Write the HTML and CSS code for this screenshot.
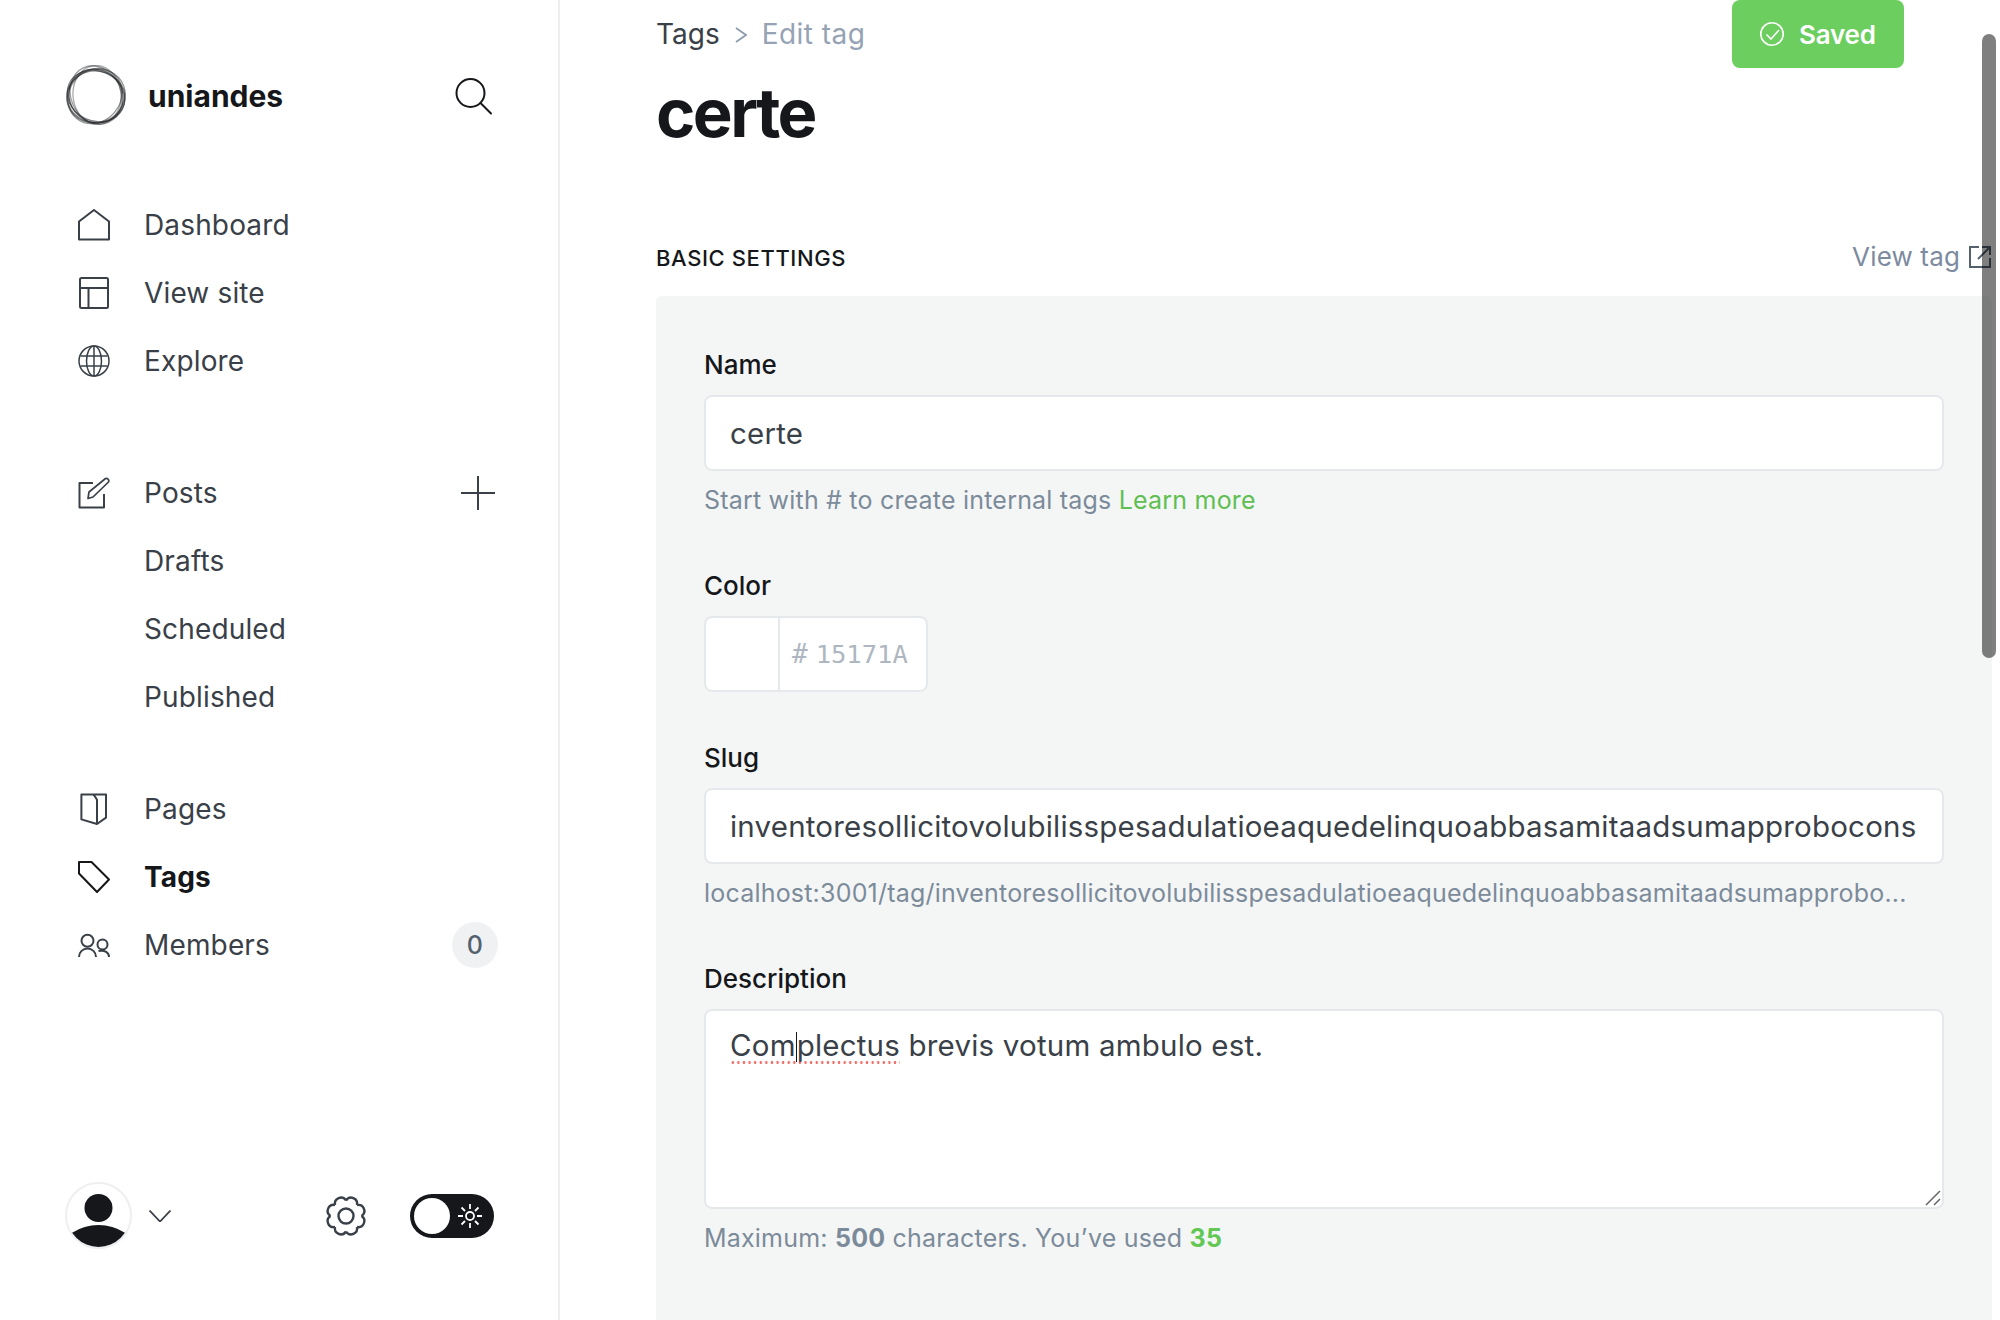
FILE: index.html
```html
<!DOCTYPE html>
<html lang="en">
<head>
  <meta charset="UTF-8">
  <meta name="viewport" content="width=device-width, initial-scale=1.0">
  <title>Edit tag</title>
  <link rel="stylesheet" href="styles.css">
</head>
<body>
  <aside class="sidebar">
    <div class="brand">
      <svg class="logo" viewBox="0 0 62 62" fill="none" stroke="#2b2d30" stroke-width="1.300">
        <ellipse cx="31" cy="31" rx="29.500" ry="25" transform="rotate(25 31 31)" stroke-opacity=".6"/>
        <ellipse cx="31" cy="30" rx="30" ry="25" transform="rotate(65 31 30)" stroke-opacity=".45"/>
        <ellipse cx="32" cy="30" rx="29.500" ry="24" transform="rotate(85 32 30)" stroke-opacity=".4"/>
        <ellipse cx="30" cy="31" rx="29" ry="25.500" transform="rotate(-50 30 31)" stroke-opacity=".5"/>
        <ellipse cx="31" cy="32" rx="29" ry="26" transform="rotate(5 31 32)" stroke-opacity=".6"/>
        <ellipse cx="31" cy="31" rx="29.500" ry="26.500" transform="rotate(-20 31 31)" stroke-opacity=".5"/>
        <ellipse cx="31" cy="31" rx="28" ry="26" transform="rotate(40 31 31)" stroke-opacity=".75"/>
      </svg>
      <span class="brand-name">uniandes</span>
      <svg class="search" viewBox="0 0 38 38" fill="none" stroke="#15171a" stroke-width="2" stroke-linecap="round">
        <circle cx="15.500" cy="16" r="14"/>
        <path d="M25.500 26 36 36.500"/>
      </svg>
    </div>

    <nav class="nav">
      <ul class="nav-group">
        <li class="nav-item">
          <svg class="nav-icon" viewBox="0 0 32 32"><path d="M1 30.500V12.500L16 1l15 11.500V30.500z"/></svg>
          Dashboard
        </li>
        <li class="nav-item">
          <svg class="nav-icon" viewBox="0 0 32 32"><rect x="2" y="1" width="28" height="30" rx="1.500"/><path d="M2 11h28M10.500 11v20"/></svg>
          View site
        </li>
        <li class="nav-item">
          <svg class="nav-icon thin" viewBox="0 0 32 32"><circle cx="16" cy="16" r="15"/><ellipse cx="16" cy="16" rx="7.500" ry="15"/><path d="M2.500 11h27M2.500 21h27M16 1v30"/></svg>
          Explore
        </li>
      </ul>
      <ul class="nav-group">
        <li class="nav-item">
          <svg class="nav-icon" viewBox="0 0 32 32"><path d="M15 6H1.500v24.500h24.500V17"/><path d="M11 15 27.500 1.500a2.500 2.500 0 0 1 3 3.500L15 20l-5 1.500z" stroke-width="1.700"/></svg>
          Posts
          <svg class="plus" viewBox="0 0 34 34"><path d="M17 0v34M0 17h34"/></svg>
        </li>
        <li class="nav-item sub">Drafts</li>
        <li class="nav-item sub">Scheduled</li>
        <li class="nav-item sub">Published</li>
      </ul>
      <ul class="nav-group">
        <li class="nav-item">
          <svg class="nav-icon" viewBox="0 0 32 32"><path d="M3.400 1.400H28v23.200L19 31 3.400 26.400z"/><path d="M15.600 1.400 19 6.700V31"/></svg>
          Pages
        </li>
        <li class="nav-item active">
          <svg class="nav-icon" viewBox="0 0 32 32"><path d="M1 1h12.500L31 18.500 19 31 1 12.500z"/></svg>
          Tags
        </li>
        <li class="nav-item">
          <svg class="nav-icon" viewBox="0 0 32 32"><circle cx="9.500" cy="11.800" r="6"/><path d="M1 28c0-5 4-8.500 8.500-8.500S18 23 18 28"/><circle cx="24.500" cy="15.500" r="5"/><path d="M20.500 22c6.500-1.500 10.500 2 10.500 6"/></svg>
          Members
          <span class="badge">0</span>
        </li>
      </ul>
    </nav>

    <div class="sidebar-foot">
      <div class="avatar">
        <svg viewBox="0 0 63 63"><circle cx="31.500" cy="24" r="14"/><ellipse cx="31.500" cy="66" rx="36" ry="25"/></svg>
      </div>
      <svg class="chevron" viewBox="0 0 22 12"><path d="M.5.5 11 11.500 21.500.5"/></svg>
      <svg class="gear" viewBox="0 0 40 40">
        <defs><path id="tooth" d="M35.500 20C41.200 23.700 37.600 32.300 31 31"/></defs>
        <use href="#tooth"/>
        <use href="#tooth" transform="rotate(45 20 20)"/>
        <use href="#tooth" transform="rotate(90 20 20)"/>
        <use href="#tooth" transform="rotate(135 20 20)"/>
        <use href="#tooth" transform="rotate(180 20 20)"/>
        <use href="#tooth" transform="rotate(225 20 20)"/>
        <use href="#tooth" transform="rotate(270 20 20)"/>
        <use href="#tooth" transform="rotate(315 20 20)"/>
        <circle cx="20" cy="20" r="7.500"/>
      </svg>
      <div class="theme-toggle">
        <span class="knob"></span>
        <svg class="sun" viewBox="0 0 24 24"><circle cx="12" cy="12" r="4"/><path d="M12 0v5M12 19v5M0 12h5M19 12h5M3.500 3.500 7 7M17 17l3.500 3.500M3.500 20.500 7 17M17 7l3.500-3.500"/></svg>
      </div>
    </div>
  </aside>

  <main class="main">
    <div class="topbar">
      <div class="crumbs">
        <span class="crumb-link">Tags</span>
        <svg class="crumb-sep" viewBox="0 0 12 16"><path d="M1 1l10 7-10 7"/></svg>
        <span class="crumb-current">Edit tag</span>
      </div>
      <button class="saved-btn" type="button">
        <svg viewBox="0 0 24 24"><circle cx="12" cy="12" r="11.200"/><path d="M6.500 12.500l4.500 4.500 8-9"/></svg>
        Saved
      </button>
    </div>

    <h1 class="title">certe</h1>

    <div class="section-head">
      <h2>Basic settings</h2>
      <span class="view-tag">View tag
        <svg viewBox="0 0 22 22"><path d="M10 1H1v20h20v-9"/><path d="M9 13 21 1M13 1h8v8"/></svg>
      </span>
    </div>

    <section class="panel">
      <div class="field">
        <label for="name">Name</label>
        <input class="text-input" id="name" type="text" value="certe">
        <p class="hint">Start with # to create internal tags <a href="#">Learn more</a></p>
      </div>

      <div class="field color-field">
        <label for="color">Color</label>
        <div class="color-input">
          <span class="swatch"></span>
          <span class="hash">#</span>
          <span class="hex" id="color">15171A</span>
        </div>
      </div>

      <div class="field">
        <label for="slug">Slug</label>
        <input class="text-input" id="slug" type="text" value="inventoresollicitovolubilisspesadulatioeaquedelinquoabbasamitaadsumapprobocons">
        <p class="hint">localhost:3001/tag/inventoresollicitovolubilisspesadulatioeaquedelinquoabbasamitaadsumapprobo...</p>
      </div>

      <div class="field">
        <label>Description</label>
        <div class="area-wrap">
          <div class="text-area"><span class="misspelt">Com<span class="caret"></span>plectus</span> brevis votum ambulo est.</div>
          <svg class="grip" viewBox="0 0 16 16"><path d="M1 15 15 1M9 15l6-6"/></svg>
        </div>
        <p class="hint">Maximum: <b>500</b> characters. You’ve used <b class="count">35</b></p>
      </div>
    </section>
  </main>

  <div class="scroll-thumb"></div>
</body>
</html>
```
FILE: styles.css
```css
* {
  margin: 0;
  padding: 0;
  box-sizing: border-box;
}

body {
  display: flex;
  height: 100vh;
  overflow: hidden;
  background: #fff;
  color: #15171a;
  font-family: Inter, "Noto Sans", sans-serif;
}

/* Sidebar */
.sidebar {
  flex: 0 0 560px;
  display: flex;
  flex-direction: column;
  padding: 65px 60px 71px 65px;
  border-right: 2px solid #eceef0;
}

.brand {
  display: flex;
  align-items: center;
  height: 62px;
}

.logo {
  width: 62px;
  height: 62px;
}

.brand-name {
  margin-left: 21px;
  font-size: 30px;
  font-weight: 700;
}

.search {
  width: 38px;
  height: 38px;
  margin-left: auto;
  margin-right: 5px;
}

.nav {
  margin-top: 64px;
}

.nav-group {
  list-style: none;
  margin-bottom: 64px;
}

.nav-group:nth-child(2) {
  margin-bottom: 44px;
}

.nav-item {
  display: flex;
  align-items: center;
  height: 68px;
  padding-left: 13px;
  font-size: 28px;
  letter-spacing: .15px;
  color: #394047;
}

.nav-item.sub {
  padding-left: 79px;
}

.nav-item.active {
  font-weight: 700;
  color: #15171a;
}

.nav-icon {
  width: 32px;
  height: 32px;
  margin-right: 34px;
  fill: none;
  stroke: #394047;
  stroke-width: 2;
  stroke-linejoin: round;
}

.nav-icon.thin {
  stroke-width: 1.500;
}

.active .nav-icon {
  stroke: #15171a;
}

.plus {
  width: 34px;
  height: 34px;
  margin-left: auto;
  margin-right: 3px;
  fill: none;
  stroke: #394047;
  stroke-width: 2;
}

.badge {
  display: flex;
  align-items: center;
  justify-content: center;
  width: 46px;
  height: 46px;
  margin-left: auto;
  border-radius: 50%;
  background: #eff1f3;
  font-size: 25px;
  font-weight: 500;
  color: #54616e;
}

.sidebar-foot {
  display: flex;
  align-items: center;
  margin-top: auto;
}

.avatar {
  width: 67px;
  height: 67px;
  border: 2px solid #eeeff1;
  border-radius: 50%;
  overflow: hidden;
}

.avatar svg {
  display: block;
  fill: #15171a;
}

.chevron {
  width: 22px;
  height: 12px;
  margin-left: 17px;
  fill: none;
  stroke: #394047;
  stroke-width: 1.800;
}

.gear {
  width: 40px;
  height: 40px;
  margin-left: 155px;
  fill: none;
  stroke: #394047;
  stroke-width: 2.400;
  overflow: visible;
}

.theme-toggle {
  display: flex;
  align-items: center;
  justify-content: space-between;
  width: 84px;
  height: 44px;
  margin-left: 44px;
  padding: 0 12px 0 4px;
  border-radius: 22px;
  background: #15171a;
}

.knob {
  width: 36px;
  height: 36px;
  border-radius: 50%;
  background: #fff;
}

.sun {
  width: 24px;
  height: 24px;
  fill: none;
  stroke: #fff;
  stroke-width: 1.800;
}

/* Main column */
.main {
  flex: 1;
  min-width: 0;
  padding: 0 8px 0 96px;
}

.topbar {
  display: flex;
  align-items: center;
  justify-content: space-between;
  height: 68px;
  margin-right: 88px;
}

.crumbs {
  display: flex;
  align-items: center;
  font-size: 28px;
}

.crumb-link {
  color: #394047;
}

.crumb-sep {
  width: 12px;
  height: 16px;
  margin: 2px 15px 0 15px;
  fill: none;
  stroke: #8e9cac;
  stroke-width: 1.800;
}

.crumb-current {
  color: #95a3b5;
  letter-spacing: .45px;
}

.saved-btn {
  display: flex;
  align-items: center;
  gap: 15px;
  width: 172px;
  height: 68px;
  padding-left: 28px;
  border: none;
  border-radius: 8px;
  background: #6bce5e;
  color: #fff;
  font-family: inherit;
  font-size: 26px;
  font-weight: 600;
  letter-spacing: -.2px;
}

.saved-btn svg {
  width: 24px;
  height: 24px;
  fill: none;
  stroke: #fff;
  stroke-width: 1.600;
}

.title {
  height: 80px;
  margin-top: 5px;
  font-size: 67px;
  font-weight: 700;
  line-height: 80px;
  letter-spacing: -2.600px;
}

.section-head {
  display: flex;
  align-items: center;
  justify-content: space-between;
  height: 36px;
  margin-top: 87px;
}

.section-head h2 {
  font-size: 22px;
  font-weight: 500;
  letter-spacing: .6px;
  text-transform: uppercase;
}

.view-tag {
  display: flex;
  align-items: center;
  gap: 9px;
  margin: 0 1px 3px 0;
  font-size: 26px;
  letter-spacing: .15px;
  color: #7c8b9f;
}

.view-tag svg {
  width: 22px;
  height: 22px;
  fill: none;
  stroke: #54616e;
  stroke-width: 2;
}

.panel {
  margin-top: 20px;
  padding: 51px 48px 120px;
  border-radius: 6px;
  background: #f4f6f6;
}

.field {
  margin-bottom: 50px;
}

.field label {
  display: block;
  margin-bottom: 12px;
  font-size: 26px;
  font-weight: 500;
  line-height: 36px;
}

.text-input {
  display: block;
  width: 100%;
  height: 76px;
  padding: 0 24px;
  border: 2px solid #e6e9eb;
  border-radius: 8px;
  background: #fff;
  color: #394047;
  font-family: inherit;
  font-size: 29.500px;
  letter-spacing: .2px;
  outline: none;
}

.hint {
  margin-top: 11px;
  font-size: 25px;
  line-height: 36px;
  letter-spacing: .2px;
  color: #7c8b9a;
}

.hint a {
  color: #5fbf52;
  text-decoration: none;
}

.hint .count {
  color: #62c853;
}

.color-field {
  margin-bottom: 48px;
}

.color-input {
  display: flex;
  align-items: center;
  width: 224px;
  height: 76px;
  border: 2px solid #e6e9eb;
  border-radius: 8px;
  background: #fff;
  color: #aeb7c1;
  font-size: 26px;
}

.swatch {
  width: 74px;
  height: 100%;
  border-right: 2px solid #e6e9eb;
}

.hash {
  margin-left: 12px;
  font-family: "DejaVu Sans Mono", monospace;
}

.hex {
  margin-left: 8px;
  font-family: "DejaVu Sans Mono", monospace;
  font-size: 25.500px;
}

.area-wrap {
  position: relative;
}

.text-area {
  height: 200px;
  padding: 16px 24px;
  border: 2px solid #e6e9eb;
  border-radius: 8px;
  background: #fff;
  color: #394047;
  font-size: 29.500px;
  line-height: 36px;
  letter-spacing: .2px;
  overflow: hidden;
}

.grip {
  position: absolute;
  right: 3px;
  bottom: 3px;
  width: 16px;
  height: 16px;
  fill: none;
  stroke: #666;
  stroke-width: 1.500;
}

.misspelt {
  padding-bottom: 1px;
  background: radial-gradient(circle, #f0706a 1.200px, transparent 1.500px) left bottom / 5.600px 3px repeat-x;
}

.caret {
  display: inline-block;
  width: 0;
  height: 30px;
  border-left: 1px solid #15171a;
  vertical-align: -6px;
}

/* overlay scrollbar */
.scroll-thumb {
  position: absolute;
  top: 34px;
  left: 1982px;
  width: 14px;
  height: 624px;
  border-radius: 7px;
  background: rgba(0, 0, 0, .5);
}
```
